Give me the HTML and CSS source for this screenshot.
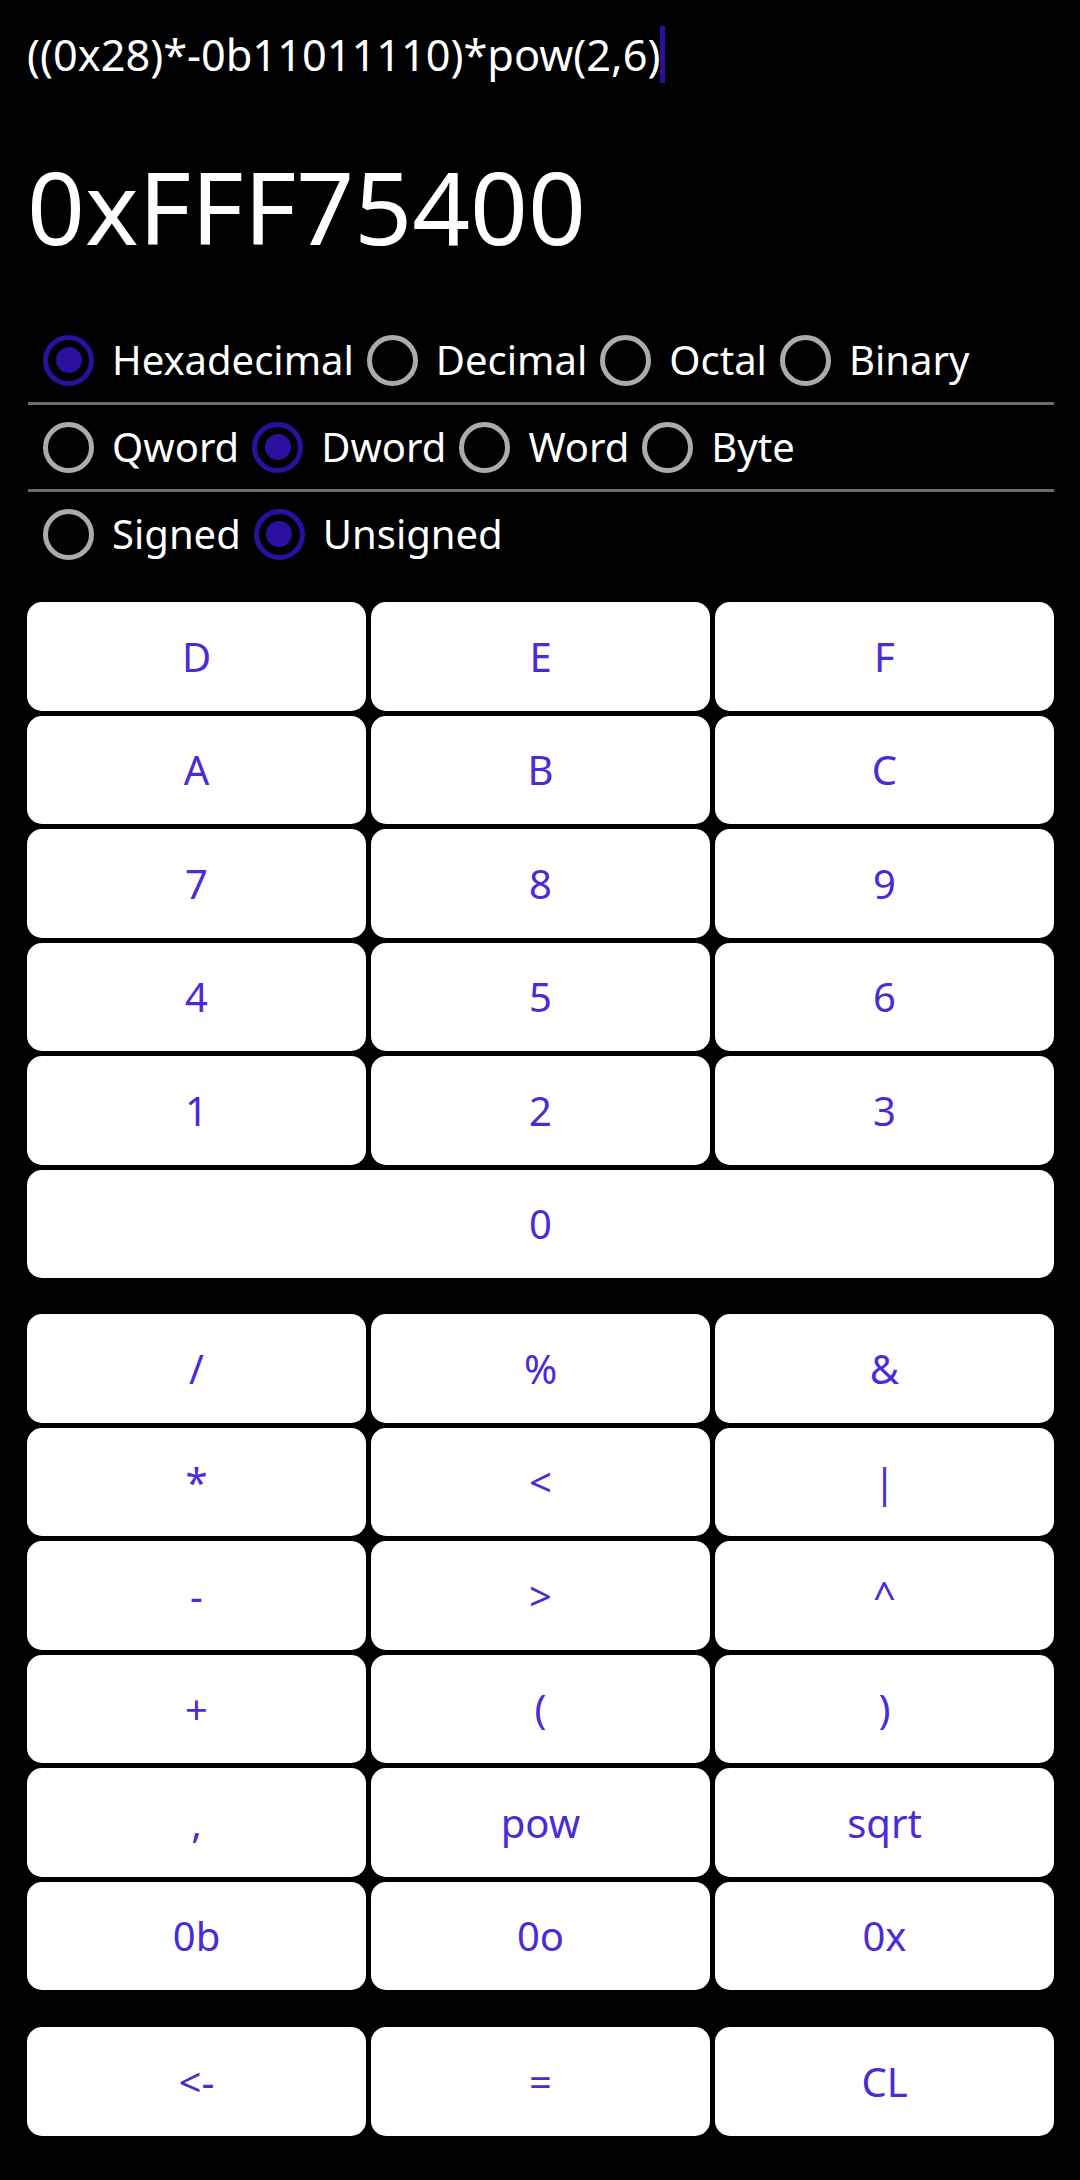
FILE: index.html
```html
<!DOCTYPE html>
<html>
<head>
<meta charset="utf-8">
<link rel="stylesheet" href="styles.css">
</head>
<body>
<div class="app">
  <div class="expr"><span class="expr-text">((0x28)*-0b11011110)*pow(2,6)</span><span class="cursor"></span></div>
  <div class="result">0xFFF75400</div>

  <div class="radio-row">
    <div class="radio checked"><span class="circle"></span><span class="label">Hexadecimal</span></div>
    <div class="radio"><span class="circle"></span><span class="label">Decimal</span></div>
    <div class="radio"><span class="circle"></span><span class="label">Octal</span></div>
    <div class="radio"><span class="circle"></span><span class="label">Binary</span></div>
  </div>
  <div class="divider"></div>
  <div class="radio-row">
    <div class="radio"><span class="circle"></span><span class="label">Qword</span></div>
    <div class="radio checked"><span class="circle"></span><span class="label">Dword</span></div>
    <div class="radio"><span class="circle"></span><span class="label">Word</span></div>
    <div class="radio"><span class="circle"></span><span class="label">Byte</span></div>
  </div>
  <div class="divider"></div>
  <div class="radio-row">
    <div class="radio"><span class="circle"></span><span class="label">Signed</span></div>
    <div class="radio checked"><span class="circle"></span><span class="label">Unsigned</span></div>
  </div>

  <div class="keys keys-digits">
    <button class="key">D</button>
    <button class="key">E</button>
    <button class="key">F</button>
    <button class="key">A</button>
    <button class="key">B</button>
    <button class="key">C</button>
    <button class="key">7</button>
    <button class="key">8</button>
    <button class="key">9</button>
    <button class="key">4</button>
    <button class="key">5</button>
    <button class="key">6</button>
    <button class="key">1</button>
    <button class="key">2</button>
    <button class="key">3</button>
    <button class="key key-wide">0</button>
  </div>

  <div class="keys keys-ops">
    <button class="key">/</button>
    <button class="key">%</button>
    <button class="key">&amp;</button>
    <button class="key">*</button>
    <button class="key">&lt;</button>
    <button class="key">|</button>
    <button class="key">-</button>
    <button class="key">&gt;</button>
    <button class="key">^</button>
    <button class="key">+</button>
    <button class="key">(</button>
    <button class="key">)</button>
    <button class="key">,</button>
    <button class="key">pow</button>
    <button class="key">sqrt</button>
    <button class="key">0b</button>
    <button class="key">0o</button>
    <button class="key">0x</button>
  </div>

  <div class="keys keys-actions">
    <button class="key">&lt;-</button>
    <button class="key">=</button>
    <button class="key">CL</button>
  </div>
</div>
</body>
</html>
```

FILE: styles.css
```css
html, body {
  margin: 0;
  padding: 0;
  background: #000;
}

body {
  font-family: "Noto Sans", "Open Sans", sans-serif;
  color: #fff;
}

.app {
  width: 1080px;
  height: 2180px;
  box-sizing: border-box;
  padding: 26px 26px 0 27px;
  overflow: hidden;
}

.expr {
  height: 57px;
  line-height: 57px;
  font-size: 43.3px;
  white-space: nowrap;
  display: flex;
  align-items: flex-start;
}

.cursor {
  display: inline-block;
  width: 5px;
  height: 57px;
  background: #2b0f9e;
}

.result {
  margin-top: 73px;
  font-size: 101.3px;
  line-height: 100px;
  height: 100px;
  white-space: nowrap;
}

.radio-row {
  height: 84px;
  padding-left: 3px;
  display: flex;
  align-items: center;
}

.result + .radio-row {
  margin-top: 62px;
}

.divider {
  height: 3px;
  margin-left: 1px;
  background: #6b6b6b;
}

.radio {
  display: flex;
  align-items: center;
}

.circle {
  box-sizing: border-box;
  width: 51px;
  height: 51px;
  margin-left: 13px;
  border: 5px solid #ababab;
  border-radius: 50%;
  display: flex;
  align-items: center;
  justify-content: center;
}

.radio.checked .circle {
  border-color: #2b0f9e;
}

.radio.checked .circle::after {
  content: "";
  width: 26px;
  height: 26px;
  border-radius: 50%;
  background: #2b0f9e;
}

.label {
  margin-left: 18px;
  font-size: 40px;
  line-height: 50px;
  color: #fff;
}

.keys {
  display: grid;
  grid-template-columns: repeat(3, 1fr);
  grid-auto-rows: 108.5px;
  gap: 5px;
}

.keys-digits {
  margin-top: 26px;
}

.keys-ops {
  margin-top: 36px;
}

.keys-actions {
  margin-top: 37px;
}

.key {
  border: none;
  margin: 0;
  padding: 0;
  background: #fff;
  border-radius: 15px;
  font-family: "Noto Sans", "Open Sans", sans-serif;
  font-size: 40px;
  color: #4b2bd8;
  display: flex;
  align-items: center;
  justify-content: center;
}

.key-wide {
  grid-column: 1 / 4;
}
```
